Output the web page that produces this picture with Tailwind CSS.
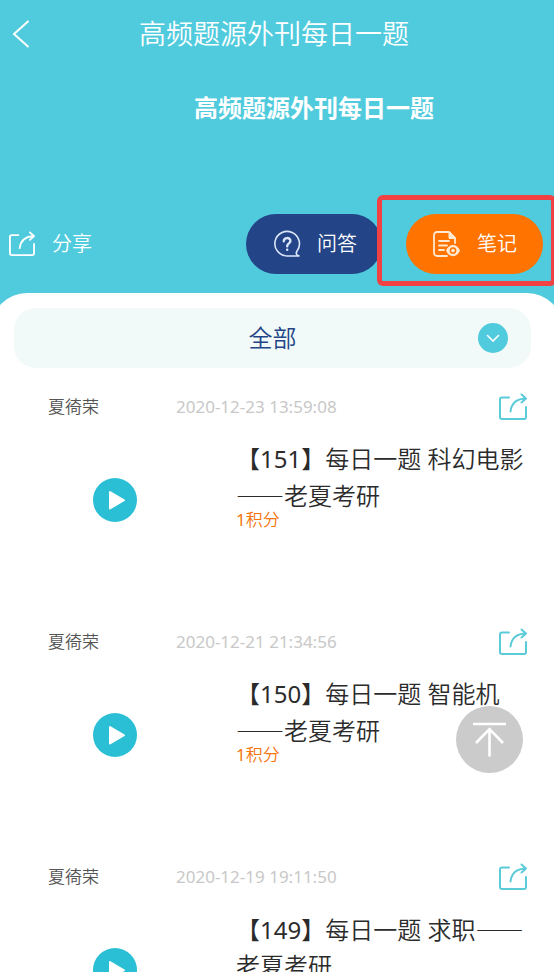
<!DOCTYPE html>
<html lang="zh-CN">
<head>
<meta charset="utf-8">
<meta name="viewport" content="width=device-width, initial-scale=1">
<title>高频题源外刊每日一题</title>
<script src="https://cdn.jsdelivr.net/npm/@tailwindcss/browser@4"></script>
</head>
<body class="h-screen overflow-hidden bg-[#50cbdd] font-['Noto_Sans','Noto_Sans_CJK_SC',sans-serif] font-[350] text-[#2b2b2b]">
<svg class="hidden" aria-hidden="true">
  <symbol id="share" viewBox="0 0 30 28">
    <path d="M11 4.500H4a2 2 0 0 0-2 2V24a2 2 0 0 0 2 2h22a2 2 0 0 0 2-2V14" fill="none" stroke="currentColor" stroke-width="2" stroke-linecap="round"/>
    <path d="M12.500 18.500C13.500 10.500 18 6 27 5.500M23.500 1.500l4.500 4-4.500 4" fill="none" stroke="currentColor" stroke-width="2" stroke-linecap="round" stroke-linejoin="round"/>
  </symbol>
  <symbol id="play" viewBox="0 0 44 44">
    <circle cx="22" cy="22" r="22" fill="#2bbfd5"/>
    <path d="M17 14v16.500l14-8.250z" fill="#fff" stroke="#fff" stroke-width="2" stroke-linejoin="round"/>
  </symbol>
</svg>
<div class="flex h-full flex-col">
  <header class="text-white">
    <div class="grid h-[68px] grid-cols-[48px_1fr_54px] items-center">
      <button type="button" aria-label="返回" class="pl-3">
        <svg class="h-7 w-[18px]" viewBox="0 0 18 28" fill="none" stroke="currentColor" stroke-width="2"><path d="M16.500 1L2 14l14.500 13"/></svg>
      </button>
      <h1 class="text-center text-[27px] leading-10">高频题源外刊每日一题</h1>
    </div>
    <h2 class="mt-5 pl-[194px] text-2xl leading-10 font-bold whitespace-nowrap">高频题源外刊每日一题</h2>
    <div class="mt-[86px] flex items-center justify-between pr-[11px] pl-2">
      <button type="button" class="flex items-center gap-4 text-xl">
        <svg class="h-[26px] w-7"><use href="#share"/></svg>分享
      </button>
      <div class="flex gap-6">
        <button type="button" class="flex h-[60px] w-[136px] items-center gap-4 rounded-full bg-[#234587] pl-[27px] text-xl">
          <svg class="size-7" viewBox="0 0 28 28" fill="none" stroke="#dce6fa" stroke-width="1.600" stroke-linecap="round" stroke-linejoin="round"><path d="M26 26H14A12.300 12.300 0 1 1 24.200 20.800c-1.400 2.200-1.600 3.600 1.800 5.200z"/><path d="M10.800 11.300c0-4.300 6.600-4.200 6.600-.3 0 2.400-3.200 2.500-3.200 5.200M14.200 19.600v.2" stroke-width="2.400"/></svg>问答
        </button>
        <div class="relative">
          <button type="button" class="flex h-[60px] w-[137px] items-center gap-4 rounded-full bg-[#ff7300] pl-[27px] text-xl">
            <svg class="size-7" viewBox="0 0 28 28" fill="none" stroke="#ffe9d2" stroke-linecap="round"><path d="M14 26H4a3 3 0 0 1-3-3V5a3 3 0 0 1 3-3h12l6 6v5" stroke-width="1.800" stroke-linejoin="round"/><path d="M16 2v6.500h6z" fill="#ffe9d2"/><path d="M6 11h10M6 15.500h8M6 20h5" stroke-width="1.800"/><path d="M13 20.500c3-7.500 11-7.500 14 0-3 7.500-11 7.500-14 0z" fill="#ffe9d2" stroke="none"/><circle cx="20" cy="20.500" r="2.600" fill="#ffe9d2" stroke="#ff7300" stroke-width="1.500"/></svg>笔记
          </button>
          <div class="pointer-events-none absolute -top-[19px] -right-[13px] h-[91px] w-[179px] rounded-md border-5 border-[#f14142]"></div>
        </div>
      </div>
    </div>
  </header>

  <main class="-mx-[9px] mt-[19px] flex-1 overflow-hidden rounded-t-[36px] bg-white px-[9px] pt-[15px]">
    <button type="button" class="mr-[23px] ml-[14px] flex h-[60px] w-[calc(100%-37px)] items-center rounded-[22px] bg-[#f1faf8] pr-[23px] pl-[53px] text-2xl text-[#234587]">
      <span class="flex-1 text-center">全部</span>
      <svg class="size-[30px]" viewBox="0 0 30 30"><circle cx="15" cy="15" r="15" fill="#50cbdd"/><path d="M9.500 12.500l5.500 5.500 5.500-5.500" fill="none" stroke="#fff" stroke-width="1.600" stroke-linecap="round"/></svg>
    </button>

    <ul class="pt-[21px]">
      <li class="h-[235px]">
        <div class="flex h-9 items-center pr-[26px] pl-12 text-[17px]">
          <span class="w-32 text-[#555]">夏徛荣</span>
          <time class="flex-1 font-normal text-[#c8c8c8]">2020-12-23 13:59:08</time>
          <button type="button" aria-label="分享" class="text-[#5ccbd9]"><svg class="h-7 w-[30px]"><use href="#share"/></svg></button>
        </div>
        <div class="flex pt-4 pr-[23px]">
          <div class="flex w-[236px] shrink-0 items-end pl-[93px]"><button type="button" aria-label="播放" class="mb-1"><svg class="size-11"><use href="#play"/></svg></button></div>
          <div>
            <h3 class="text-2xl leading-9">【<span class="font-normal">151</span>】每日一题 科幻电影<span class="font-['Noto_Sans_CJK_SC'] font-light">——</span>老夏考研</h3>
            <p class="text-[17px] leading-3 text-[#f5750f]"><span class="font-normal">1</span>积分</p>
          </div>
        </div>
      </li>
      <li class="h-[235px]">
        <div class="flex h-9 items-center pr-[26px] pl-12 text-[17px]">
          <span class="w-32 text-[#555]">夏徛荣</span>
          <time class="flex-1 font-normal text-[#c8c8c8]">2020-12-21 21:34:56</time>
          <button type="button" aria-label="分享" class="text-[#5ccbd9]"><svg class="h-7 w-[30px]"><use href="#share"/></svg></button>
        </div>
        <div class="flex pt-4 pr-[23px]">
          <div class="flex w-[236px] shrink-0 items-end pl-[93px]"><button type="button" aria-label="播放" class="mb-1"><svg class="size-11"><use href="#play"/></svg></button></div>
          <div>
            <h3 class="text-2xl leading-9">【<span class="font-normal">150</span>】每日一题 智能机<span class="font-['Noto_Sans_CJK_SC'] font-light">——</span>老夏考研</h3>
            <p class="text-[17px] leading-3 text-[#f5750f]"><span class="font-normal">1</span>积分</p>
          </div>
        </div>
      </li>
      <li class="h-[235px]">
        <div class="flex h-9 items-center pr-[26px] pl-12 text-[17px]">
          <span class="w-32 text-[#555]">夏徛荣</span>
          <time class="flex-1 font-normal text-[#c8c8c8]">2020-12-19 19:11:50</time>
          <button type="button" aria-label="分享" class="text-[#5ccbd9]"><svg class="h-7 w-[30px]"><use href="#share"/></svg></button>
        </div>
        <div class="flex pt-4 pr-[23px]">
          <div class="flex w-[236px] shrink-0 items-end pl-[93px]"><button type="button" aria-label="播放" class="mb-1"><svg class="size-11"><use href="#play"/></svg></button></div>
          <div>
            <h3 class="text-2xl leading-9">【<span class="font-normal">149</span>】每日一题 求职<span class="font-['Noto_Sans_CJK_SC'] font-light">——</span>老夏考研</h3>
            <p class="text-[17px] leading-3 text-[#f5750f]"><span class="font-normal">1</span>积分</p>
          </div>
        </div>
      </li>
    </ul>
  </main>
</div>
<button type="button" aria-label="回到顶部" class="fixed right-[31px] bottom-[199px] size-[67px] rounded-full bg-[#cbcbcb]">
  <svg class="size-full" viewBox="0 0 67 67" fill="none" stroke="#fff" stroke-width="2.600"><path d="M17 18h33M33.500 50.500V23M20 37l13.500-14L47 37"/></svg>
</button>
</body>
</html>
